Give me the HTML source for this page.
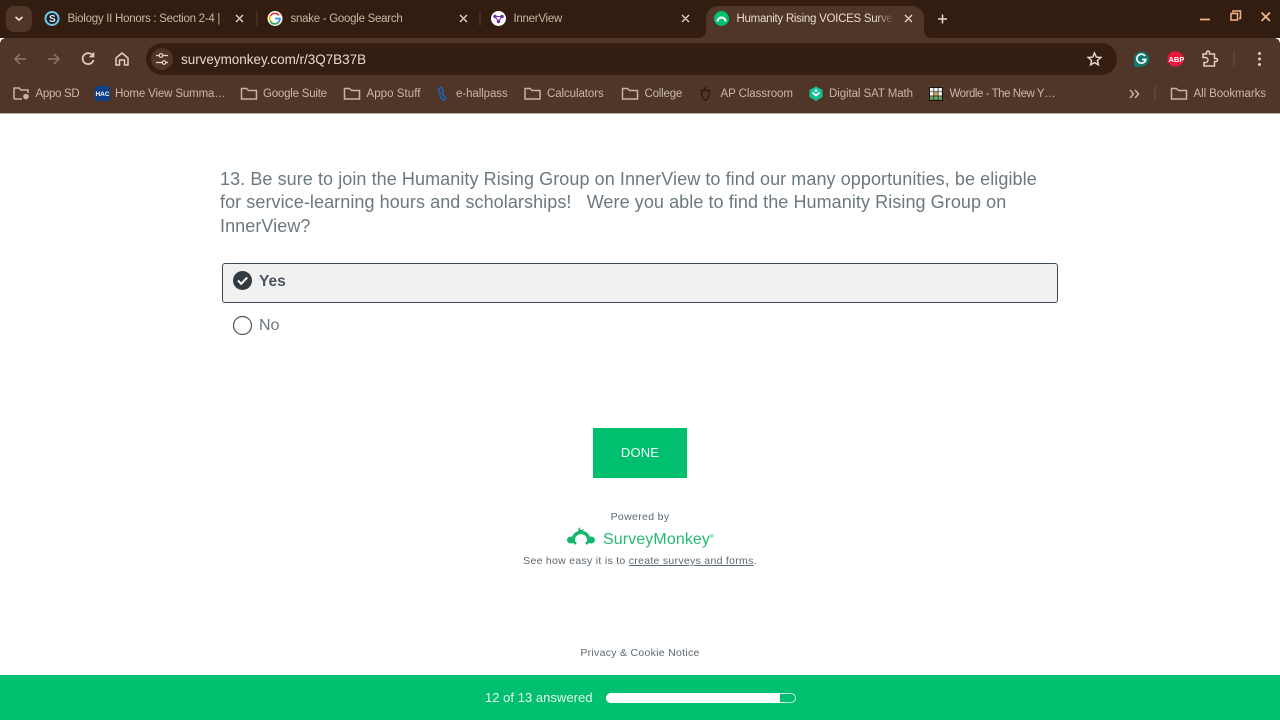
<!DOCTYPE html>
<html><head><meta charset="utf-8"><style>
html,body{margin:0;padding:0;width:1280px;height:720px;overflow:hidden;background:#fff;font-family:"Liberation Sans",sans-serif}
.a{position:absolute;white-space:nowrap}
svg{position:absolute;overflow:visible}
.tab{font-size:11.5px;color:#c9b5a6;top:12px;line-height:15px;letter-spacing:-.27px}
.bm{font-size:11.5px;color:#c8b8aa;top:87px;line-height:15px;letter-spacing:-.08px}
.q{left:220px;font-size:18px;color:#6b787f;line-height:24px;letter-spacing:.075px}
</style></head><body>
<div class="a" style="left:0;top:0;width:1280px;height:38px;background:#321d10"></div>
<div class="a" style="left:0;top:38px;width:1280px;height:75px;background:#4f3629;border-radius:6px 6px 0 0"></div>
<div class="a" style="left:0;top:113px;width:1280px;height:1px;background:#b9b3ae"></div>
<div class="a" style="left:6px;top:6px;width:26px;height:26px;border-radius:8px;background:#4f3629"></div>
<svg style="left:0;top:0" width="1280" height="113">
<path d="M15.500 17l3.500 3 3.500-3" fill="none" stroke="#f0e0d2" stroke-width="1.700"/>
<circle cx="52" cy="18.500" r="6.500" fill="#16242c" stroke="#74c7e8" stroke-width="2"/>
<path d="M257 11v15M480 11v15" stroke="#55392a"/>
<path d="M698 38c5 0 8-3 8-8V18a12 12 0 0 1 12-12H912a12 12 0 0 1 12 12V30c0 5 3 8 8 8z" fill="#4f3629"/>
<path d="M236 15l7 7M243 15l-7 7M460 15l7 7M467 15l-7 7M682 15l7 7M689 15l-7 7M905 15l7 7M912 15l-7 7" stroke="#e8d8ca" stroke-width="1.300"/>
<circle cx="275" cy="18.500" r="7.500" fill="#fff"/>
<path d="M279 15.500a5 5 0 0 0-8.500 .5" fill="none" stroke="#ea4335" stroke-width="1.800"/>
<path d="M270.300 16a5 5 0 0 0 0 5" fill="none" stroke="#fbbc05" stroke-width="1.800"/>
<path d="M270.300 21a5 5 0 0 0 8 1.500" fill="none" stroke="#34a853" stroke-width="1.800"/>
<path d="M275 18.500h4.800a5 5 0 0 1-1.500 4" fill="none" stroke="#4285f4" stroke-width="1.800"/>
<circle cx="498.500" cy="18.500" r="7.500" fill="#fff"/>
<path d="M495 16.500h7l-3.500 5z" fill="none" stroke="#6b2fa8"/>
<circle cx="495" cy="16.500" r="1.700" fill="#6b2fa8"/><circle cx="502" cy="16.500" r="1.700" fill="#6b2fa8"/><circle cx="498.500" cy="21.500" r="1.700" fill="#6b2fa8"/>
<circle cx="721.500" cy="18.500" r="7.500" fill="#00bf6f"/>
<path d="M717.500 21.500a4 4 0 0 1 8 0" fill="none" stroke="#fff" stroke-width="2.200"/>
<path d="M938 19h9M942.500 14.500v9" stroke="#eadbcd" stroke-width="1.500"/>
<path d="M1200 19.500h10" stroke="#f0b48a" stroke-width="1.700"/>
<path d="M1233 12.500v-1.500h7.500v7.500h-1.500M1231 13.500h6.500v6.500h-6.500z" fill="none" stroke="#f0b48a" stroke-width="1.500"/>
<path d="M1261.500 12.500l8.500 8.500M1270 12.500l-8.500 8.500" stroke="#f0b48a" stroke-width="1.800"/>
<path d="M26 59H15M20 54l-5 5 5 5" fill="none" stroke="#8c7669" stroke-width="1.500"/>
<path d="M48 59h11M54 54l5 5-5 5" fill="none" stroke="#8c7669" stroke-width="1.500"/>
<path d="M93 56a5.500 5.500 0 1 0 .5 4M93.500 52.500v4h-4" fill="none" stroke="#e3cfbe" stroke-width="1.700"/>
<path d="M116 65v-7l6-5 6 5v7h-3.500v-5h-5v5z" fill="none" stroke="#e3cfbe" stroke-width="1.500"/>
</svg>
<div class="a" style="left:146px;top:43px;width:971px;height:32px;border-radius:16px;background:#331e11"></div>
<svg style="left:0;top:0" width="1280" height="113">
<circle cx="162" cy="59" r="11" fill="#4f3629"/>
<path d="M156 55.500h3M163 55.500h5M156 62.500h6M166 62.500h2" stroke="#e6d6c8" stroke-width="1.300" fill="none"/>
<circle cx="161" cy="55.500" r="1.800" fill="none" stroke="#e6d6c8" stroke-width="1.200"/><circle cx="164" cy="62.500" r="1.800" fill="none" stroke="#e6d6c8" stroke-width="1.200"/>
<path d="M1094.500 53l1.800 4.100 4.500.4-3.400 3 1 4.400-3.900-2.300-3.900 2.300 1-4.400-3.400-3 4.500-.4z" fill="none" stroke="#e6d6c8" stroke-width="1.500"/>
<path d="M1134 59v8h7z" fill="#0f7a6d"/>
<circle cx="1141.500" cy="59" r="7.500" fill="#0f7a6d"/>
<path d="M1145 56a4.500 4.500 0 1 0 .8 3.500h-3.700" fill="none" stroke="#fff" stroke-width="1.700"/>
<path d="M1172 51.500h7l4.500 4.500v6l-4.500 4.500h-7l-4.500-4.500v-6z" fill="#e8173f"/>
<path d="M1203 54h3.500v-1.500a1.500 1.500 0 0 1 3 0V54h5v4.500h1.500a1.500 1.500 0 0 1 0 3H1214.500V66H1204v-3.500h1.500a2.500 2.500 0 0 0 0-5H1203z" fill="none" stroke="#e3cfbe" stroke-width="1.500"/>
<path d="M1234 52v14" stroke="#6b5042"/>
<circle cx="1259.500" cy="53.500" r="1.500" fill="#e3cfbe"/><circle cx="1259.500" cy="59" r="1.500" fill="#e3cfbe"/><circle cx="1259.500" cy="64.500" r="1.500" fill="#e3cfbe"/>
<g fill="none" stroke="#c4b4a6" stroke-width="1.500">
<path d="M14 99v-11h5l2 2h7v3M14 99h8"/>
<path d="M241.500 99v-10.500h5l2 2h8v8.500z"/>
<path d="M344.500 99v-10.500h5l2 2h8v8.500z"/>
<path d="M525 99v-10.500h5l2 2h8v8.500z"/>
<path d="M622.500 99v-10.500h5l2 2h8v8.500z"/>
<path d="M1171.500 99v-10.500h5l2 2h8v8.500z"/>
<path d="M1130 90l3.500 4-3.500 4M1135 90l3.500 4-3.500 4"/>
</g>
<circle cx="26" cy="96.500" r="2.800" fill="#c4b4a6"/>
<rect x="95" y="86" width="15" height="15" rx="1" fill="#0f3f86"/>
<text x="102.500" y="96" font-size="6.500" font-weight="700" fill="#fff" text-anchor="middle" font-family="Liberation Sans">HAC</text>
<path d="M441 87l-3 3 2 2v1.500M441 87l2 3v5l3 3-1.500 2-2.500-1-2-2.500v-3.500" fill="none" stroke="#1f62b5" stroke-width="1.500"/>
<path d="M700.500 90.500h10M704 90c0-1 1-2 2-3M701.500 91c0 5 1.500 8 4 9.500 2.500-1.500 4-4.500 4-9.500" fill="none" stroke="#2a1c14" stroke-width="1.400"/>
<path d="M816 86.500l6.500 3.500v7l-6.500 4-6.500-4v-7z" fill="#14bf96"/>
<path d="M812.500 92.500l3.500 3 3.500-3" fill="none" stroke="#fff" stroke-width="1.800"/>
<circle cx="816" cy="90.500" r="1.300" fill="#fff"/>
<rect x="929" y="87" width="14" height="14" fill="#1d1512"/>
<g fill="#f5f5f5"><rect x="930" y="88" width="3.500" height="3.500"/><rect x="934.200" y="88" width="3.500" height="3.500"/><rect x="938.400" y="88" width="3.500" height="3.500"/><rect x="930" y="92.100" width="3.500" height="3.500"/><rect x="938.400" y="92.100" width="3.500" height="3.500"/></g>
<rect x="934.200" y="92.100" width="3.500" height="3.500" fill="#c9b458"/>
<g fill="#6aaa64"><rect x="930" y="96.300" width="3.500" height="3.500"/><rect x="934.200" y="96.300" width="3.500" height="3.500"/><rect x="938.400" y="96.300" width="3.500" height="3.500"/></g>
<path d="M1155 86v15" stroke="#6b5042"/>
</svg>
<div class="a tab" style="left:67.500px;width:156px;overflow:hidden">Biology II Honors : Section 2-4 | Schoology</div>
<div class="a tab" style="left:290.500px">snake - Google Search</div>
<div class="a tab" style="left:513.500px">InnerView</div>
<div class="a tab" style="left:736.500px;width:156px;overflow:hidden;color:#e8dacd">Humanity Rising VOICES Survey</div>
<div class="a" style="left:876px;top:8px;width:18px;height:20px;background:linear-gradient(90deg,rgba(79,54,41,0),#4f3629)"></div>
<div class="a" style="left:49px;top:12.500px;width:6px;font-size:10px;line-height:13px;font-weight:700;color:#e8e8e8">S</div>
<div class="a" style="left:1168.500px;top:54.500px;font-size:7.500px;line-height:9px;font-weight:700;color:#fff">ABP</div>
<div class="a" style="left:181px;top:52px;font-size:13.500px;line-height:16px;color:#e8dacd;letter-spacing:-.03px">surveymonkey.com/r/3Q7B37B</div>
<div class="a bm" style="left:35.500px;letter-spacing:-.3px">Appo SD</div>
<div class="a bm" style="left:115px;letter-spacing:-.14px">Home View Summa…</div>
<div class="a bm" style="left:263px;letter-spacing:-.22px">Google Suite</div>
<div class="a bm" style="left:366.500px;letter-spacing:.05px">Appo Stuff</div>
<div class="a bm" style="left:456px">e-hallpass</div>
<div class="a bm" style="left:547px">Calculators</div>
<div class="a bm" style="left:644.500px;letter-spacing:-.2px">College</div>
<div class="a bm" style="left:720.500px">AP Classroom</div>
<div class="a bm" style="left:829px">Digital SAT Math</div>
<div class="a bm" style="left:949.500px;letter-spacing:-.46px">Wordle - The New Y…</div>
<div class="a bm" style="left:1193.500px">All Bookmarks</div>
<div class="a q" style="top:166.500px">13. Be sure to join the Humanity Rising Group on InnerView to find our many opportunities, be eligible</div>
<div class="a q" style="top:190px">for service-learning hours and scholarships!&nbsp;&nbsp; Were you able to find the Humanity Rising Group on</div>
<div class="a q" style="top:213.500px">InnerView?</div>
<div class="a" style="left:222px;top:263px;width:834px;height:38px;background:#f1f1f2;border:1px solid #3f4a59;border-radius:3px"></div>
<svg style="left:0;top:0" width="1280" height="340">
<circle cx="242.500" cy="280.500" r="9.500" fill="#333a40"/>
<path d="M238 280.500l3.200 3.300 6-6.300" fill="none" stroke="#fff" stroke-width="2"/>
<circle cx="242.500" cy="325.500" r="9" fill="#fff" stroke="#4a5560" stroke-width="1.200"/>
</svg>
<div class="a" style="left:259px;top:272px;font-size:15.500px;line-height:19px;font-weight:700;color:#4a5661">Yes</div>
<div class="a" style="left:259px;top:316px;font-size:16px;line-height:19px;color:#6b787f">No</div>
<div class="a" style="left:593px;top:428px;width:94px;height:50px;background:#00bf6f;color:#f2fcf7;font-size:13px;line-height:50px;text-align:center;letter-spacing:.15px">DONE</div>
<div class="a" style="left:540px;width:200px;top:510px;text-align:center;font-size:10.500px;line-height:14px;color:#5d6870;letter-spacing:.34px">Powered by</div>
<svg style="left:0;top:0" width="1280" height="560">
<path d="M573 542c0-6 3-9.500 8-9.500s8 3.500 8 9.500" fill="none" stroke="#14b86d" stroke-width="3.500"/>
<ellipse cx="571" cy="540" rx="4" ry="3.500" fill="#14b86d"/><ellipse cx="591" cy="540" rx="4" ry="3.500" fill="#14b86d"/>
<path d="M578 532l1-5 2 3 3-1-2 4z" fill="#14b86d"/>
<circle cx="575" cy="543" r="1.500" fill="#14b86d"/><circle cx="587" cy="543" r="1.500" fill="#14b86d"/>
</svg>
<div class="a" style="left:603px;top:526.500px;font-size:16px;line-height:20px;color:#26b96f;letter-spacing:.1px">SurveyMonkey<span style="font-size:5px;vertical-align:6px">®</span></div>
<div class="a" style="left:440px;width:400px;top:554px;text-align:center;font-size:10.500px;line-height:14px;color:#5d6870;letter-spacing:.29px">See how easy it is to <span style="text-decoration:underline">create surveys and forms</span>.</div>
<div class="a" style="left:440px;width:400px;top:646px;text-align:center;font-size:10.500px;line-height:14px;color:#5d6870;letter-spacing:.29px">Privacy &amp; Cookie Notice</div>
<div class="a" style="left:0;top:675px;width:1280px;height:45px;background:#00bf6f"></div>
<div class="a" style="left:485px;top:689px;font-size:13px;line-height:17px;color:#e6f8ef;letter-spacing:.03px">12 of 13 answered</div>
<div class="a" style="left:606px;top:693px;width:188px;height:8px;border:1px solid #cdf2e0;border-radius:5px"></div>
<div class="a" style="left:606px;top:693px;width:174px;height:10px;background:#fff;border-radius:5px 0 0 5px"></div>
</body></html>
